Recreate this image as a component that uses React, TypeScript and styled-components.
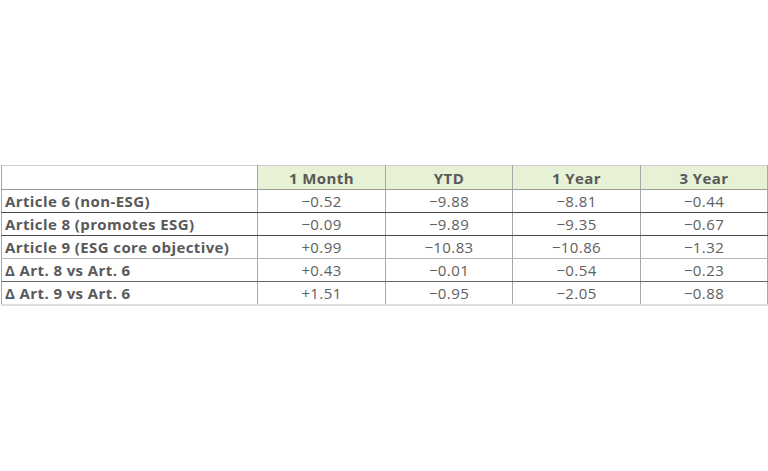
import React from "react";
import styled, { createGlobalStyle } from "styled-components";

const Global = createGlobalStyle`
  html, body { margin: 0; padding: 0; background: #ffffff; }
  body { font-family: "Open Sans", "Noto Sans", sans-serif; }
`;

const Page = styled.div`
  height: 471px;
  display: flex;
  align-items: center;
  padding-left: 1px;
  box-sizing: border-box;
`;

const Table = styled.table`
  width: 766px;
  border-collapse: collapse;
  table-layout: fixed;
  color: #595959;
  font-size: 15px;
  letter-spacing: 0.4px;
  border-top: 1px solid #cfcfcf;
  border-bottom: 2px solid #dedede;
`;

const HeadCell = styled.th<{ $blank?: boolean }>`
  height: 23px;
  padding: 0;
  font-weight: 700;
  text-align: center;
  background: ${(p) => (p.$blank ? "#ffffff" : "#e6f1d5")};
  border-left: 1px solid #a8a8a8;
  border-right: 1px solid #a8a8a8;
  border-bottom: 1px solid #9a9a9a;
`;

const Row = styled.tr<{ $line: string }>`
  & > td {
    border-bottom: 1px solid ${(p) => p.$line};
  }
`;

const Label = styled.td`
  height: 22px;
  padding: 0 0 0 3px;
  font-weight: 700;
  text-align: left;
  white-space: nowrap;
  border-left: 1px solid #a8a8a8;
  border-right: 1px solid #a8a8a8;
`;

const Value = styled.td`
  height: 22px;
  padding: 0;
  text-align: center;
  font-weight: 400;
  color: #606060;
  border-left: 1px solid #a8a8a8;
  border-right: 1px solid #a8a8a8;
`;

const rows = [
  { label: "Article 6 (non-ESG)", v: ["−0.52", "−9.88", "−8.81", "−0.44"], line: "#4a4a4a" },
  { label: "Article 8 (promotes ESG)", v: ["−0.09", "−9.89", "−9.35", "−0.67"], line: "#4a4a4a" },
  { label: "Article 9 (ESG core objective)", v: ["+0.99", "−10.83", "−10.86", "−1.32"], line: "#b5b5b5" },
  { label: "Δ Art. 8 vs Art. 6", v: ["+0.43", "−0.01", "−0.54", "−0.23"], line: "#6a6a6a" },
  { label: "Δ Art. 9 vs Art. 6", v: ["+1.51", "−0.95", "−2.05", "−0.88"], line: "#dedede" },
];

export default function App() {
  return (
    <>
      <Global />
      <Page>
        <Table>
          <colgroup>
            <col style={{ width: 256 }} />
            <col style={{ width: 128 }} />
            <col style={{ width: 127 }} />
            <col style={{ width: 128 }} />
            <col style={{ width: 127 }} />
          </colgroup>
          <thead>
            <tr>
              <HeadCell $blank />
              <HeadCell>1 Month</HeadCell>
              <HeadCell>YTD</HeadCell>
              <HeadCell>1 Year</HeadCell>
              <HeadCell>3 Year</HeadCell>
            </tr>
          </thead>
          <tbody>
            {rows.map((r) => (
              <Row key={r.label} $line={r.line}>
                <Label>{r.label}</Label>
                {r.v.map((x, i) => (
                  <Value key={i}>{x}</Value>
                ))}
              </Row>
            ))}
          </tbody>
        </Table>
      </Page>
    </>
  );
}
